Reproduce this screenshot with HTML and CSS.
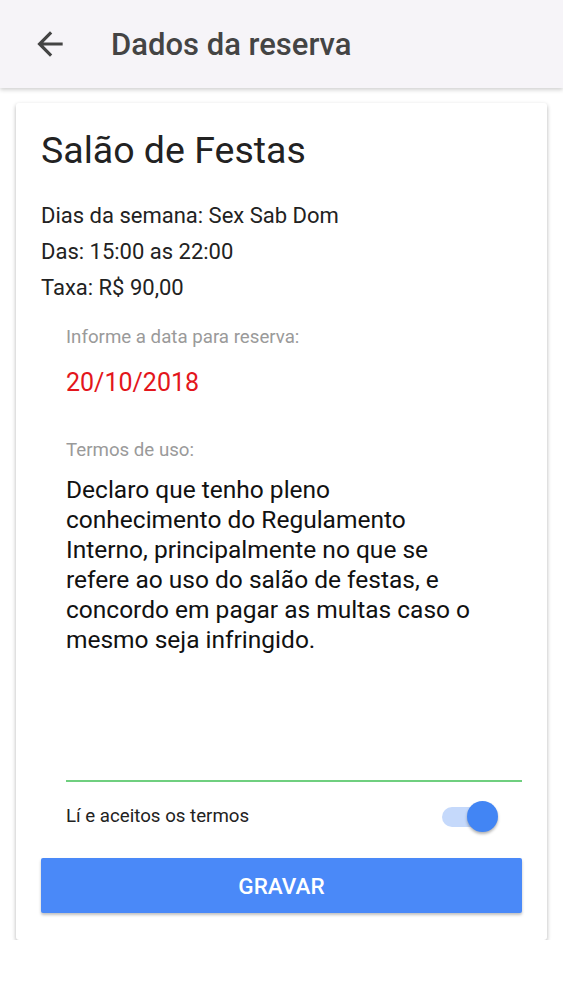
FILE: index.html
```html
<!DOCTYPE html>
<html lang="pt">
<head>
    <meta charset="UTF-8">
    <meta name="viewport" content="width=device-width, initial-scale=1.0">
    <title>Dados da reserva</title>
    <link rel="stylesheet" href="styles.css">
</head>
<body>
    <header class="toolbar">
        <svg class="back" width="38" height="38" viewBox="0 0 24 24">
            <path d="M20 11H7.83l5.59-5.59L12 4l-8 8 8 8 1.41-1.41L7.83 13H20v-2z" fill="#444"/>
        </svg>
        <h1>Dados da reserva</h1>
    </header>

    <div class="card">
        <h2>Salão de Festas</h2>
        <div class="info">
            <p>Dias da semana: Sex Sab Dom</p>
            <p>Das: 15:00 as 22:00</p>
            <p>Taxa: R$ 90,00</p>
        </div>

        <div class="field">
            <label>Informe a data para reserva:</label>
            <div class="date">20/10/2018</div>
        </div>

        <div class="field terms">
            <label>Termos de uso:</label>
            <p class="terms-text">Declaro que tenho pleno conhecimento do Regulamento Interno, principalmente no que se refere ao uso do salão de festas, e concordo em pagar as multas caso o mesmo seja infringido.</p>
        </div>

        <div class="accept">
            <span>Lí e aceitos os termos</span>
            <div class="switch">
                <div class="track"></div>
                <div class="thumb"></div>
            </div>
        </div>

        <button class="btn-save">GRAVAR</button>
    </div>
</body>
</html>
```

FILE: styles.css
```css
body {
    margin: 0;
    font-family: Roboto, "Liberation Sans", sans-serif;
    background-color: #fff;
    width: 563px;
}
.toolbar {
    height: 88px;
    background: #f6f4f8;
    display: flex;
    align-items: center;
    padding-left: 31px;
    box-shadow: 0 2px 4px rgba(0, 0, 0, 0.18);
    position: relative;
}
.back {
    display: block;
}
.toolbar h1 {
    margin: 0 0 0 42px;
    font-size: 31px;
    font-weight: 500;
    color: #444;
}
.card {
    margin: 15px 16px 0;
    background: white;
    border-radius: 3px;
    box-shadow: 0 2px 4px rgba(0, 0, 0, 0.3);
    padding: 25px 25px 27px;
}
.card h2 {
    margin: 0;
    font-size: 37.5px;
    font-weight: 400;
    color: #222;
    line-height: 44px;
}
.info {
    margin-top: 26px;
}
.info p {
    margin: 0;
    font-size: 22px;
    color: #222;
    line-height: 36px;
}
.field {
    padding-left: 25px;
    margin-top: 20px;
}
.field label {
    display: block;
    font-size: 18.7px;
    color: #9a9a9a;
    line-height: 22px;
}
.date {
    color: #e3161c;
    font-size: 25px;
    margin-top: 20px;
    line-height: 30px;
}
.terms {
    margin-top: 41px;
}
.terms-text {
    margin: 14px 0 0;
    font-size: 24.5px;
    line-height: 30px;
    color: #111;
    height: 305px;
    border-bottom: 2px solid #6fcf7f;
    padding-right: 36px;
}
.accept {
    display: flex;
    justify-content: space-between;
    align-items: center;
    padding-left: 25px;
    margin-top: 16px;
    height: 36px;
    font-size: 18.7px;
    color: #222;
}
.switch {
    position: relative;
    width: 60px;
    height: 32px;
    margin-right: 20px;
}
.track {
    position: absolute;
    left: 0;
    top: 7px;
    width: 46px;
    height: 20px;
    border-radius: 10px;
    background: #c5d9fb;
}
.thumb {
    position: absolute;
    left: 25px;
    top: 1px;
    width: 31px;
    height: 31px;
    border-radius: 50%;
    background: #4285f4;
    box-shadow: 0 2px 3px rgba(0, 0, 0, 0.3);
}
.btn-save {
    display: block;
    width: 100%;
    margin-top: 24px;
    height: 55px;
    border: none;
    border-radius: 2px;
    background: #4a89f8;
    color: white;
    font-family: Roboto, "Liberation Sans", sans-serif;
    font-size: 22.5px;
    font-weight: 500;
    box-shadow: 0 2px 3px rgba(0, 0, 0, 0.25);
}
```
